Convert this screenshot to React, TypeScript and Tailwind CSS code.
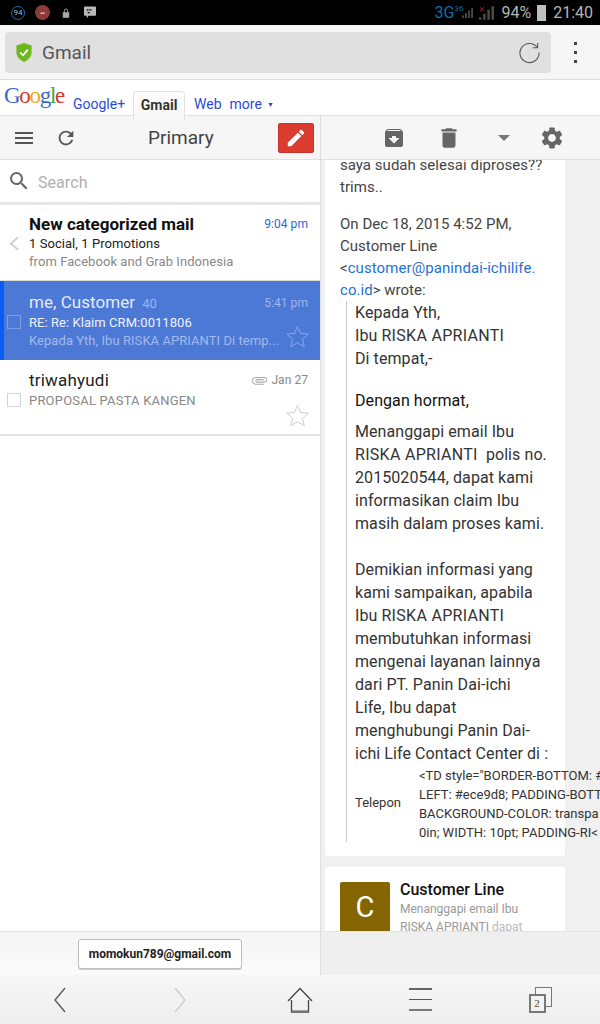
import { MdArchive, MdAttachFile, MdDelete, MdEdit, MdMenu, MdRefresh, MdSearch, MdSettings } from "react-icons/md";

const closingLines = [
  "Demikian informasi yang",
  "kami sampaikan, apabila",
  "membutuhkan informasi",
  "mengenai layanan lainnya",
  "dari PT. Panin Dai-ichi",
  "Life, Ibu dapat",
  "menghubungi Panin Dai-",
  "ichi Life Contact Center di :",
];

function Star({ className }: { className: string }) {
  return (
    <svg viewBox="0 0 24 24" className={className} fill="none" stroke="currentColor" strokeWidth="1">
      <path d="M12 1.5l3.2 7.3 8 .7-6 5.3 1.8 7.8L12 18.5l-7 4.1 1.8-7.8-6-5.3 8-.7z" />
    </svg>
  );
}

function StatusBar() {
  return (
    <div className="flex h-[25px] shrink-0 items-center bg-black pl-[11px] pr-[7px] text-[#b5b5b5]">
      <span className="flex h-[14px] w-[14px] items-center justify-center rounded-full border border-[#1d6fa5] text-[8px] leading-none">94</span>
      <span className="ml-[10px] flex h-[15px] w-[15px] items-center justify-center rounded-full bg-[#8f3a3a] text-[6px] text-[#ddd]">▪▪</span>
      <svg viewBox="0 0 10 12" className="ml-[12px] h-[10px] w-[8px]" fill="#a8a8a8">
        <rect x="1" y="5" width="8" height="7" />
        <path d="M3 5V3a2 2 0 014 0v2" fill="none" stroke="#a8a8a8" strokeWidth="1.2" />
      </svg>
      <svg viewBox="0 0 13 13" className="ml-[14px] h-[13px] w-[12px]" fill="#b8b8b8">
        <path d="M1 0h11a1 1 0 011 1v8a1 1 0 01-1 1H5l-2 3v-3H1a1 1 0 01-1-1V1a1 1 0 011-1z" />
        <rect x="3" y="3" width="2" height="1.4" fill="#000" />
        <rect x="6" y="3" width="2" height="1.4" fill="#000" />
        <rect x="4" y="6" width="2" height="1.4" fill="#000" />
      </svg>
      <span className="ml-auto text-[16px] leading-none text-[#0d6fa8]">3G</span>
      <span className="mb-[8px] text-[8px] leading-none text-[#0d6fa8]">36</span>
      <svg viewBox="0 0 18 16" className="-ml-[1px] h-[16px] w-[11px]" fill="#4a4a4a">
        <path d="M15 0h3v16h-3zM10 4h3v12h-3zM5 8h3v8H5zM0 12h3v4H0z" />
      </svg>
      <svg viewBox="0 0 18 16" className="ml-[6px] h-[16px] w-[15px]" fill="#4a4a4a">
        <path d="M15 0h3v16h-3zM10 4h3v12h-3zM5 9h3v7H5zM0 13h3v3H0z" />
        <path d="M1 1l5 5M6 1L1 6" stroke="#a02020" strokeWidth="1.2" />
      </svg>
      <span className="ml-[7px] text-[16px] leading-none">94%</span>
      <span className="ml-[6px] h-[16px] w-[9px] bg-[#c0c0c0]" />
      <span className="ml-[7px] text-[16px] leading-none">21:40</span>
    </div>
  );
}

function AddressBar() {
  return (
    <div className="flex h-[55px] shrink-0 items-center border-b border-[#dcdcdc] bg-[#f6f6f6] pl-[5px]">
      <div className="flex h-[41px] w-[546px] items-center rounded-[4px] bg-[#e0e0e0] pl-[10px] pr-[10px]">
        <svg viewBox="0 0 18 20" className="h-[19px] w-[18px]">
          <path d="M9 0l8 2.5v7c0 5-3.5 8.500-8 10.500C4.500 18 1 14.500 1 9.500v-7z" fill="#6cb81e" />
          <path d="M5 10l3 3 5-6" fill="none" stroke="#fff" strokeWidth="1.8" />
        </svg>
        <span className="ml-[9px] text-[19px] leading-none text-[#555]">Gmail</span>
        <svg viewBox="0 0 24 24" className="ml-auto h-[23px] w-[23px]" fill="none" stroke="#555" strokeWidth="1.1">
          <path d="M20 6.500A10 10 0 1022 12" />
          <path d="M20.500 2v5h-5" />
        </svg>
      </div>
      <div className="ml-[23px] flex flex-col gap-[6px]">
        <span className="h-[3px] w-[3px] bg-[#444]" />
        <span className="h-[3px] w-[3px] bg-[#444]" />
        <span className="h-[3px] w-[3px] bg-[#444]" />
      </div>
    </div>
  );
}

function GoogleBar() {
  return (
    <div className="relative z-10 flex h-[36px] shrink-0 items-end border-b border-[#e2e2e2] bg-white pl-[4px]">
      <span className="mb-[8px] font-['Liberation_Serif',serif] text-[23px] leading-none tracking-[-1.3px]">
        <span className="text-[#3a68d8]">G</span>
        <span className="text-[#d8382c]">o</span>
        <span className="text-[#eba91c]">o</span>
        <span className="text-[#3a68d8]">g</span>
        <span className="text-[#3aa648]">l</span>
        <span className="text-[#d8382c]">e</span>
      </span>
      <a className="mb-[1px] ml-[9px] text-[14px] leading-[20px] text-[#2a4bd7]">Google+</a>
      <div className="-mb-[6px] ml-[8px] flex h-[30px] w-[52px] items-start justify-center rounded-t-[4px] border border-b-0 border-[#e2e2e2] bg-gradient-to-b from-white to-[#f7f7f7] pt-[3px] text-[14px] font-bold leading-[20px] text-[#333]">
        Gmail
      </div>
      <a className="mb-[1px] ml-[9px] text-[14px] leading-[20px] text-[#2a4bd7]">Web</a>
      <a className="mb-[1px] ml-[8px] text-[14px] leading-[20px] text-[#2a4bd7]">more</a>
      <span className="mb-[3px] ml-[5px] text-[7px] leading-[14px] text-[#2a4bd7]">▼</span>
    </div>
  );
}

function Toolbar() {
  return (
    <div className="flex h-[44px] shrink-0 border-b border-[#e0e0e0] bg-[#f6f6f6]">
      <div className="flex w-[321px] items-center border-r border-[#dedede] pl-[12px] text-[#555]">
        <MdMenu className="h-[24px] w-[24px]" />
        <MdRefresh className="ml-[19px] h-[22px] w-[22px]" />
        <span className="ml-[71px] text-[19px] leading-none text-[#444]">Primary</span>
        <button className="ml-[64px] flex h-[30px] w-[36px] items-center justify-center rounded-[2px] border border-[#c8322a] bg-[#dc3b30] text-white">
          <MdEdit className="h-[22px] w-[22px]" />
        </button>
      </div>
      <div className="flex flex-1 items-center pl-[61px] text-[#666]">
        <MdArchive className="h-[24px] w-[24px]" />
        <MdDelete className="ml-[30px] h-[26px] w-[26px]" />
        <span className="ml-[36px] h-0 w-0 border-x-[6px] border-t-[6px] border-x-transparent border-t-[#777]" />
        <MdSettings className="ml-[29px] h-[26px] w-[26px]" />
      </div>
    </div>
  );
}

function MailList() {
  return (
    <div className="flex flex-1 flex-col overflow-hidden bg-white tracking-[0.06px]">
      <div className="flex h-[45px] shrink-0 items-center border-b-[3px] border-[#e5e5e5] pl-[7px]">
        <MdSearch className="h-[24px] w-[24px] text-[#666]" />
        <span className="ml-[7px] pt-[3px] text-[16px] leading-none text-[#b0b0b0]">Search</span>
      </div>
      <div className="relative h-[76px] shrink-0 border-b border-[#dcdcdc] pl-[29px] pr-[12px] pt-[8px]">
        <svg viewBox="0 0 12 16" className="absolute left-[9px] top-[31px] h-[15px] w-[11px]" fill="none" stroke="#cfcfcf" strokeWidth="2">
          <path d="M10 1L2 8l8 7" />
        </svg>
        <div className="flex items-center justify-between">
          <span className="text-[17px] font-bold leading-[22px] tracking-normal text-[#111]">New categorized mail</span>
          <span className="text-[12px] text-[#2a66d9]">9:04 pm</span>
        </div>
        <div className="text-[13px] leading-[18px] text-[#222]">1 Social, 1 Promotions</div>
        <div className="text-[13px] leading-[18px] text-[#888]">from Facebook and Grab Indonesia</div>
      </div>
      <div className="relative h-[79px] shrink-0 border-l-[4px] border-[#0b5cf7] bg-[repeating-linear-gradient(180deg,#4a76d6_0px,#4a76d6_1px,#4f7bd8_1px,#4f7bd8_2px)] pl-[25px] pr-[12px] pt-[10px]">
        <span className="absolute left-[3px] top-[34px] h-[14px] w-[14px] border border-[#7d9de3]" />
        <div className="flex items-center justify-between">
          <span className="text-[17px] leading-[22px] text-[#e4ebfa]">
            me, Customer<span className="ml-[7px] text-[13px] text-[#9db6ec]">40</span>
          </span>
          <span className="text-[12px] text-[#9db6ec]">5:41 pm</span>
        </div>
        <div className="-mt-[1px] text-[13px] leading-[18px] text-[#eef2fc]">RE: Re: Klaim CRM:0011806</div>
        <div className="text-[13px] leading-[18px] text-[#a2baed]">Kepada Yth, Ibu RISKA APRIANTI Di temp...</div>
        <Star className="absolute right-[11px] top-[44px] h-[23px] w-[23px] text-[#8ba8e8]" />
      </div>
      <div className="relative h-[76px] shrink-0 border-b-[2px] border-[#e0e0e0] pl-[29px] pr-[12px] pt-[9px]">
        <span className="absolute left-[7px] top-[33px] h-[14px] w-[14px] border border-[#d5d5d5]" />
        <div className="flex items-center justify-between">
          <span className="text-[17px] leading-[22px] tracking-[0.2px] text-[#222]">triwahyudi</span>
          <span className="flex items-center text-[12px] text-[#888]">
            <MdAttachFile className="mr-[3px] h-[17px] w-[17px] rotate-90 text-[#aaa]" />
            Jan 27
          </span>
        </div>
        <div className="mt-[1px] text-[13px] leading-[18px] tracking-[0.2px] text-[#888]">PROPOSAL PASTA KANGEN</div>
        <Star className="absolute right-[11px] top-[44px] h-[23px] w-[23px] text-[#ccc]" />
      </div>
    </div>
  );
}

function MessagePane() {
  return (
    <div className="flex flex-1 flex-col gap-[11px] overflow-hidden bg-[#f0f0f0] pl-[4px]">
      <div className="h-[696px] w-[240px] shrink-0 rounded-b-[3px] bg-white pl-[15px] text-[15px] leading-[22px] text-[#444]">
        <div className="whitespace-nowrap tracking-[0.03px]">
          <div className="-mt-[6px]">saya sudah selesai diproses??</div>
          <div>trims..</div>
          <div className="mt-[15px]">On Dec 18, 2015 4:52 PM,</div>
          <div>Customer Line</div>
          <div>
            &lt;<span className="tracking-[0.08px] text-[#1f6fd9]">customer@panindai-ichilife.</span>
          </div>
          <div>
            <span className="text-[#1f6fd9]">co.id</span>&gt; wrote:
          </div>
        </div>
        <div className="ml-[6px] h-[541px] w-[254px] overflow-hidden border-l border-[#c8c8c8] pl-[8px] text-[16px] leading-[23px] tracking-[0.08px] whitespace-pre text-[#333]">
          <div>Kepada Yth,</div>
          <div>
            Ibu <span className="tracking-[0.3px]">RISKA APRIANTI</span>
          </div>
          <div>Di tempat,-</div>
          <div className="mt-[19px] text-[#111]">Dengan hormat,</div>
          <div className="mt-[8px]">
            <div>Menanggapi email Ibu</div>
            <div>
              <span className="tracking-[0.3px]">RISKA APRIANTI</span>{"  "}polis no.
            </div>
            <div>2015020544, dapat kami</div>
            <div>informasikan claim Ibu</div>
            <div>masih dalam proses kami.</div>
          </div>
          <div className="mt-[23px]">
            {closingLines.slice(0, 2).map((line) => (
              <div key={line}>{line}</div>
            ))}
            <div>
              Ibu <span className="tracking-[0.3px]">RISKA APRIANTI</span>
            </div>
            {closingLines.slice(2).map((line) => (
              <div key={line}>{line}</div>
            ))}
          </div>
          <div className="flex items-center tracking-normal">
            <span className="-mt-[2px] w-[64px] text-[13px] leading-none">Telepon</span>
            <div className="w-[181px] overflow-hidden pt-[1px] text-[13px] leading-[19px]">
              <div>&lt;TD style="BORDER-BOTTOM: #</div>
              <div>LEFT: #ece9d8; PADDING-BOTT</div>
              <div>BACKGROUND-COLOR: transpa</div>
              <div>0in; WIDTH: 10pt; PADDING-RI&lt;</div>
            </div>
          </div>
        </div>
      </div>
      <div className="flex w-[240px] shrink-0 rounded-t-[3px] bg-white pl-[15px] pt-[15px]">
        <div className="flex h-[50px] w-[50px] items-center justify-center rounded-[2px] bg-[#846500] text-[29px] leading-none text-white">C</div>
        <div className="ml-[10px]">
          <div className="pt-[1px] text-[16px] font-medium leading-[14px] text-[#111]">Customer Line</div>
          <div className="mt-[3px] whitespace-pre text-[12px] leading-[18px] text-[#999]">
            Menanggapi email Ibu{"\n"}RISKA APRIANTI <span className="text-[#bbb]">dapat</span>
          </div>
        </div>
      </div>
    </div>
  );
}

function BottomNav() {
  return (
    <div className="flex h-[49px] shrink-0 items-center bg-gradient-to-b from-[#f7f7f7] to-[#eeeeee]">
      <div className="flex w-[120px] justify-center">
        <svg viewBox="0 0 14 26" className="h-[26px] w-[14px]" fill="none" stroke="#555" strokeWidth="1.300">
          <path d="M12 1L2 13l10 12" />
        </svg>
      </div>
      <div className="flex w-[120px] justify-center">
        <svg viewBox="0 0 14 26" className="h-[26px] w-[14px]" fill="none" stroke="#ccc" strokeWidth="1.300">
          <path d="M2 1l10 12L2 25" />
        </svg>
      </div>
      <div className="flex w-[120px] justify-center">
        <svg viewBox="0 0 26 26" className="h-[26px] w-[26px]" fill="none" stroke="#444" strokeWidth="1.300">
          <path d="M1 14L13 1.500 25 14M4.500 13v12h17V13" />
          <path d="M4.500 24.500h17" strokeWidth="2.200" stroke="#777" />
        </svg>
      </div>
      <div className="flex w-[120px] flex-col items-center gap-[9px]">
        <span className="h-[2px] w-[23px] bg-[#666]" />
        <span className="h-[1px] w-[23px] bg-[#555]" />
        <span className="h-[2px] w-[23px] bg-[#777]" />
      </div>
      <div className="flex w-[120px] justify-center">
        <div className="relative h-[26px] w-[23px]">
          <span className="absolute right-0 top-0 h-[20px] w-[17px] border border-[#777]" />
          <span className="absolute bottom-0 left-0 flex h-[19px] w-[17px] items-center justify-center border-2 border-[#777] bg-[#f2f2f2] font-['Liberation_Serif',serif] text-[11px] leading-none text-[#444]">2</span>
        </div>
      </div>
    </div>
  );
}

export default function App() {
  return (
    <div className="flex h-[1024px] w-[600px] flex-col overflow-hidden bg-white font-['Roboto',sans-serif]">
      <StatusBar />
      <AddressBar />
      <GoogleBar />
      <Toolbar />
      <div className="flex min-h-0 flex-1">
        <div className="flex w-[321px] shrink-0 flex-col border-r border-[#dedede]">
          <MailList />
          <div className="flex h-[44px] shrink-0 items-center justify-center border-t border-[#e4e4e4] bg-gradient-to-b from-[#f5f5f5] to-[#fafafa]">
            <button className="h-[30px] w-[164px] rounded-[3px] border border-[#bdbdbd] bg-white text-[12px] font-bold text-[#222] shadow-[0_1px_0_#ccc]">
              momokun789@gmail.com
            </button>
          </div>
        </div>
        <div className="flex min-w-0 flex-1 flex-col">
          <MessagePane />
          <div className="h-[44px] shrink-0 border-t border-[#e4e4e4] bg-[#efefef]" />
        </div>
      </div>
      <BottomNav />
    </div>
  );
}
